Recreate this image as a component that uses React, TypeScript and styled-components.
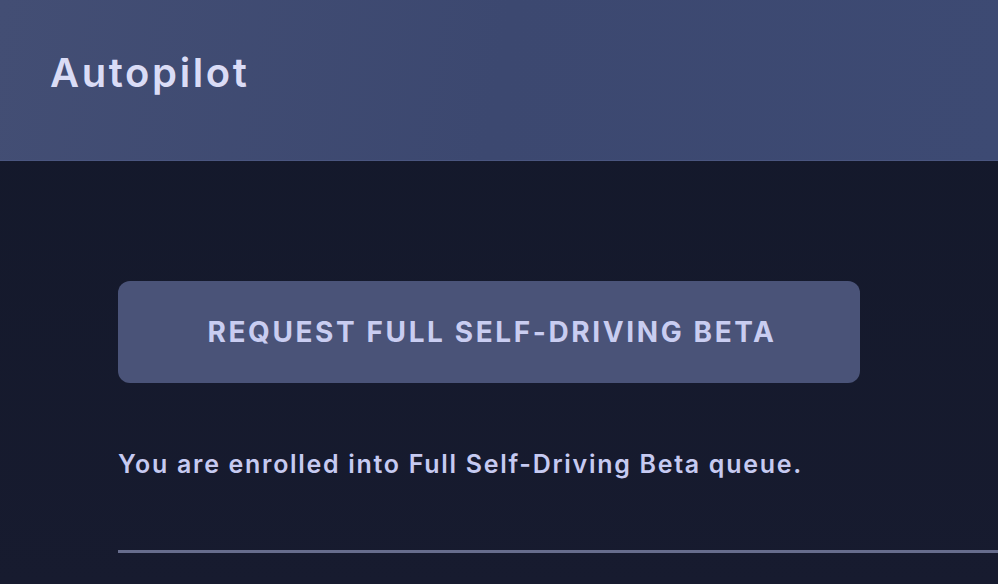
import React from 'react'
import styled, { createGlobalStyle } from 'styled-components'

const GlobalStyle = createGlobalStyle`
  html, body {
    margin: 0;
    padding: 0;
    background: #151a2c;
    font-family: "Inter", "Lato", "Liberation Sans", sans-serif;
  }
`;

const Screen = styled.div`
  width: 998px;
  height: 584px;
  overflow: hidden;
  display: flex;
  flex-direction: column;
  background: linear-gradient(180deg, #13182a 0%, #171b2f 100%);
`;

const Header = styled.header`
  height: 161px;
  flex: none;
  display: flex;
  align-items: flex-start;
  padding: 48px 0 0 50px;
  box-sizing: border-box;
  background: linear-gradient(100deg, #434e74 0%, #3c4870 50%, #3d4a73 100%);
  border-bottom: 1px solid #4a5680;
`;

const Title = styled.h1`
  margin: 0;
  font-size: 40px;
  font-weight: 600;
  letter-spacing: 2.6px;
  color: #dadcf6;
`;

const Content = styled.div`
  display: flex;
  flex-direction: column;
  align-items: flex-start;
  padding: 120px 0 0 118px;
`;

const RequestButton = styled.button`
  width: 742px;
  height: 102px;
  border: none;
  border-radius: 12px;
  background: #4a5378;
  color: #c9cdf1;
  font-family: inherit;
  font-size: 28px;
  font-weight: 700;
  letter-spacing: 2.6px;
  display: flex;
  align-items: center;
  justify-content: center;
  padding: 0 0 0 6px;
  cursor: pointer;
`;

const Note = styled.p`
  margin: 64px 0 0 0;
  font-size: 25px;
  font-weight: 600;
  line-height: 34px;
  letter-spacing: 1.7px;
  color: #c6caf1;
`;

const Divider = styled.hr`
  align-self: stretch;
  margin: 69px 0 0 0;
  border: none;
  height: 3px;
  background: #676d8d;
`;

const App = () => {
  return (
    <>
      <GlobalStyle />
      <Screen>
        <Header>
          <Title>Autopilot</Title>
        </Header>
        <Content>
          <RequestButton>REQUEST FULL SELF-DRIVING BETA</RequestButton>
          <Note>You are enrolled into Full Self-Driving Beta queue.</Note>
          <Divider />
        </Content>
      </Screen>
    </>
  )
}

export default App
